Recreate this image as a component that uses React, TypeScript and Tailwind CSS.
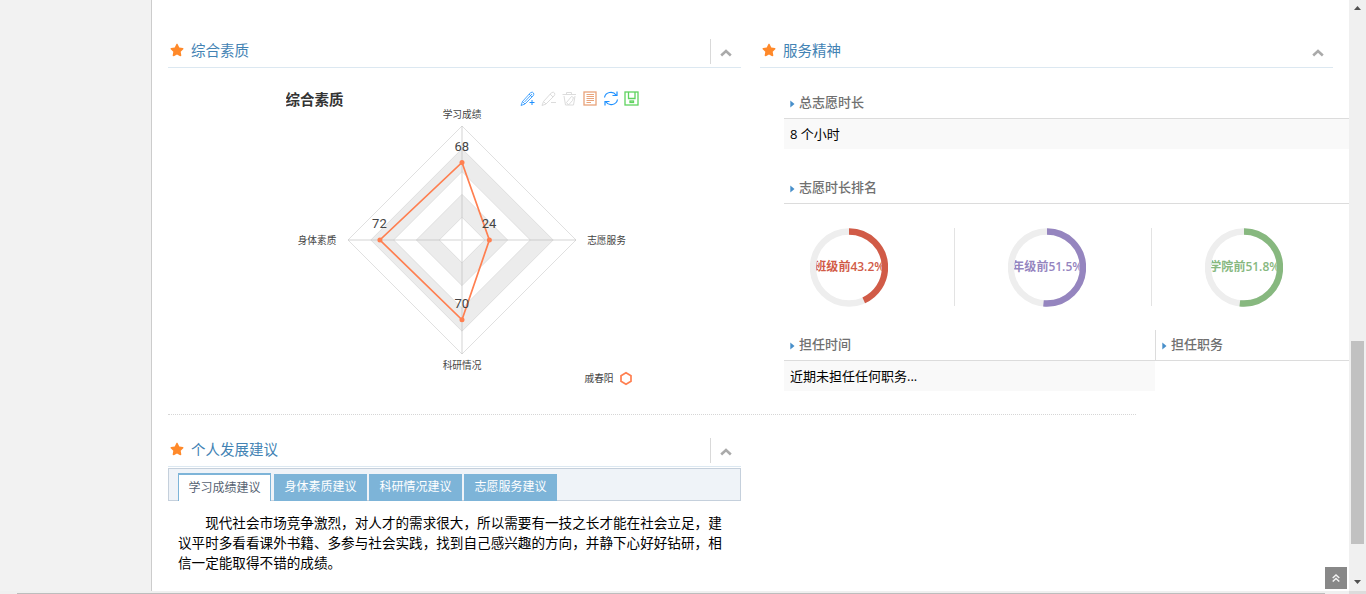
import type { ReactNode } from "react";
import { FaStar } from "react-icons/fa";

const Chevron = () => (
  <svg width="12" height="8" viewBox="0 0 12 8" fill="none" stroke="#aaa" strokeWidth="2.6">
    <path d="M1.2 6.500 L6 2 L10.8 6.500" />
  </svg>
);

function WidgetHeader({ title, divider }: { title: string; divider?: boolean }) {
  return (
    <div className="flex h-[30px] w-[573px] items-center border-b border-[#dce8f1]">
      <FaStar className="mt-[-5px] ml-[2px] size-[14px] text-[#ff892a]" />
      <h4 className="mt-[-3px] ml-[7px] flex-1 text-[14.5px] leading-5 text-[#4383b4]">{title}</h4>
      <div
        className={
          divider
            ? "mt-[-2px] flex h-[25px] w-[31px] items-center border-l border-[#d9d9d9] pt-[2px] pl-[9px]"
            : "mt-[-2px] flex h-[25px] w-[31px] items-center border-l border-transparent pt-[2px] pl-[9px]"
        }
      >
        <Chevron />
      </div>
    </div>
  );
}

function SubHeader({ children }: { children: ReactNode }) {
  return (
    <div className="flex h-[31px] items-center border-b border-[#dcdcdc] pl-[6px] text-[13px] font-medium text-[#707070]">
      <svg width="5" height="8" viewBox="0 0 5 8" className="mt-px mr-1">
        <path d="M0.3 0.500 L4.5 4 L0.3 7.500Z" fill="#478fca" />
      </svg>
      {children}
    </div>
  );
}

const CX = 176;
const CY = 165;
const R = 114;
const diamond = (f: number) =>
  `M${CX} ${CY - R * f} L${CX + R * f} ${CY} L${CX} ${CY + R * f} L${CX - R * f} ${CY}Z`;

function Radar() {
  const dots = [
    [CX, CY - R * 0.68],
    [CX + R * 0.24, CY],
    [CX, CY + R * 0.7],
    [CX - R * 0.72, CY],
  ];
  return (
    <svg width="370" height="320" viewBox="0 0 370 320" className="ml-[118px]">
      <text x="-0.5" y="30" fontSize="14.5" fontWeight="700" fill="#333">综合素质</text>
      <g fillRule="evenodd" fill="#ececec">
        <path d={diamond(0.8) + diamond(0.6)} />
        <path d={diamond(0.4) + diamond(0.2)} />
      </g>
      <g fill="none" stroke="#dcdcdc" strokeWidth="0.9">
        {[0.2, 0.4, 0.6, 0.8, 1].map((f) => (
          <path key={f} d={diamond(f)} />
        ))}
      </g>
      <path
        d={`M${CX} ${CY - R}V${CY + R}M${CX - R} ${CY}H${CX + R}`}
        stroke="#bbb"
        strokeOpacity="0.32"
        strokeWidth="2"
      />
      <path
        d={"M" + dots.map((d) => d.join(" ")).join("L") + "Z"}
        fill="none"
        stroke="#ff7f50"
        strokeWidth="1.7"
      />
      {dots.map((d) => (
        <circle key={d.join()} cx={d[0]} cy={d[1]} r="2.5" fill="#ff7f50" />
      ))}
      <g fontSize="13" fill="#444" textAnchor="middle" fontFamily="Roboto, sans-serif">
        <text x="175.7" y="75.500">68</text>
        <text x="203" y="153">24</text>
        <text x="175.7" y="233">70</text>
        <text x="93.4" y="153">72</text>
      </g>
      <g fontSize="9.7" fill="#444" textAnchor="middle">
        <text x="176" y="42.5">学习成绩</text>
        <text x="320.5" y="168.500">志愿服务</text>
        <text x="176" y="294">科研情况</text>
        <text x="31" y="168.500">身体素质</text>
        <text x="313" y="307">戚春阳</text>
      </g>
      <path d="M340 297.8 L345 300.7V306.3L340 309.2L335 306.3V300.7Z" fill="none" stroke="#ff7f50" strokeWidth="1.7" />
      <g fill="none" strokeWidth="1">
        <g stroke="#1e90ff">
          <path d="M235 30.5 L236.5 26.5 L244.5 17.7 Q246.5 16.4 247.5 18 Q248.3 19.5 247 21 L239 29 Z M236.5 26.5 L239 29 M238.5 27 L246 19 M243 19 L246 22" strokeWidth="0.8" />
          <path d="M243.5 27.5h5M246 25v5" />
        </g>
        <g stroke="#dcdcdc">
          <path d="M256 30.5 L257.5 26.5 L265.5 17.7 Q267.5 16.4 268.5 18 Q269.3 19.5 268 21 L260 29 Z M257.5 26.5 L260 29 M264 19 L267 22" />
          <path d="M265 27.5h5" />
          <path d="M276.500 19.500h13.500M280.500 19V17.500h5V19M278 21l1.500 9h8l1.500-9M280.500 27.500l5-6 2 1-1 3-4 4.500Z" />
        </g>
        <g stroke="#e9a37a">
          <rect x="298" y="17" width="12" height="13" strokeWidth="1.3" />
          <path d="M300.500 19.500h7.500M300.500 21.500h7.500M300.500 23.500h7.500M300.500 25.500h7.500M300.500 27.500h4.500" />
        </g>
        <g stroke="#1e90ff" strokeWidth="1.2">
          <path d="M318.500 22.500C319.500 17 327 15.500 330 20M331 16.500V20.500H326.500M331.500 24.500C330.500 30 323 31.500 320 27M319 30.500V26.500H323.500" />
        </g>
        <g stroke="#5fd35f" strokeWidth="1.3">
          <rect x="339" y="17" width="13" height="13" />
          <path d="M342.500 17v6.500h6.500V17" />
          <rect x="344" y="26" width="3.500" height="1.500" />
        </g>
      </g>
    </svg>
  );
}

function Gauge({ label, value, color }: { label: string; value: number; color: string }) {
  const c = 2 * Math.PI * 36;
  return (
    <svg width="78" height="79" viewBox="0 0 78 79" className="shrink-0">
      <text x="39.500" y="43" textAnchor="middle" fontSize="12" fontWeight="600" fill={color}>
        {label}前{value}%
      </text>
      <circle cx="39" cy="39.500" r="36" fill="none" stroke="#eee" strokeWidth="6.3" />
      <circle
        cx="39"
        cy="39.500"
        r="36"
        fill="none"
        stroke={color}
        strokeWidth="6.3"
        strokeDasharray={`${(c * value) / 100} ${c}`}
        transform="rotate(-90 39 39.500)"
      />
    </svg>
  );
}

const tabs = ["身体素质建议", "科研情况建议", "志愿服务建议"];

export default function App() {
  return (
    <div className="relative flex h-[594px] w-[1366px] flex-col overflow-hidden bg-white font-['Open_Sans','Noto_Sans_CJK_SC',sans-serif] text-[13px] text-black">
      <div className="flex h-[591px]">
        <aside className="w-[152px] shrink-0 border-r border-[#ccc] bg-[#f2f2f2]" />
        <main className="w-[1197px] shrink-0 pt-[38px] pl-4">
          <div className="flex h-[376px] gap-[19px]">
            <section className="w-[573px] shrink-0">
              <WidgetHeader title="综合素质" divider />
              <div className="pt-[7px]">
                <Radar />
              </div>
            </section>
            <section className="w-[589px] shrink-0">
              <WidgetHeader title="服务精神" />
              <div className="ml-6 pt-5">
                <SubHeader>总志愿时长</SubHeader>
                <div className="flex h-[30px] items-center bg-[#f9f9f9] pt-px pl-[6px]">8 个小时</div>
                <div className="h-6" />
                <SubHeader>志愿时长排名</SubHeader>
                <div className="mt-6 flex h-[78px]">
                  <div className="w-[171px] border-r border-[#e3e3e3] pl-[26px]">
                    <Gauge label="班级" value={43.2} color="#d15b47" />
                  </div>
                  <div className="w-[197px] border-r border-[#e3e3e3] pl-[53px]">
                    <Gauge label="年级" value={51.5} color="#9585bf" />
                  </div>
                  <div className="pl-[53px]">
                    <Gauge label="学院" value={51.8} color="#87b87f" />
                  </div>
                </div>
                <div className="mt-6 flex">
                  <div className="w-[371px]">
                    <SubHeader>担任时间</SubHeader>
                    <div className="flex h-[30px] items-center bg-[#f9f9f9] pt-px pl-[6px]">近期未担任任何职务...</div>
                  </div>
                  <div className="h-[31px] flex-1 border-l border-[#dcdcdc]">
                    <SubHeader>担任职务</SubHeader>
                  </div>
                </div>
              </div>
            </section>
          </div>
          <div className="w-[968px] border-t border-dotted border-[#d6d6d6]" />
          <section className="mt-[22px] w-[573px]">
            <WidgetHeader title="个人发展建议" divider />
            <div className="mt-px flex h-[33px] items-end border border-[#c5d0dc] bg-[#eff3f8] pl-[9px] text-[12px]">
              <div className="mb-[-1px] flex h-7 w-[93px] items-center justify-center border border-t-2 border-b-0 border-[#7db4d8] bg-white pb-px text-[#576373]">
                学习成绩建议
              </div>
              <div className="mb-[-1px] ml-[3px] flex h-[27px] gap-[2px]">
                {tabs.map((t) => (
                  <div key={t} className="flex w-[93px] items-center justify-center bg-[#7db4d8] pb-px text-white">
                    {t}
                  </div>
                ))}
              </div>
            </div>
            <p className="mt-3 ml-[10px] w-[546px] indent-[2em] text-[13.6px] leading-5">
              现代社会市场竞争激烈，对人才的需求很大，所以需要有一技之长才能在社会立足，建议平时多看看课外书籍、多参与社会实践，找到自己感兴趣的方向，并静下心好好钻研，相信一定能取得不错的成绩。
            </p>
          </section>
        </main>
        <div className="flex w-[17px] flex-col items-center justify-between bg-[#f0f0f0] pt-[6px] pb-[7px]">
          <svg width="7" height="4" viewBox="0 0 7 4"><path d="M0 4L3.500 0L7 4Z" fill="#505050" /></svg>
          <div className="mt-[331px] h-[203px] w-[13px] bg-[#c1c1c1]" />
          <svg width="7" height="4" viewBox="0 0 7 4" className="mt-auto"><path d="M0 0L3.500 4L7 0Z" fill="#505050" /></svg>
        </div>
      </div>
      <div className="flex h-[3px] items-end bg-[#f0f0f0]">
        <div className="ml-[17px] h-px w-[1308px] bg-[#bdbdbd]" />
        <div className="ml-6 h-[3px] flex-1 bg-[#dcdcdc]" />
      </div>
      <div className="absolute top-[567px] left-[1325px] flex h-[22px] w-[22px] items-center justify-center bg-[#888]">
        <svg width="8" height="8" viewBox="0 0 8 8" fill="none" stroke="#f2f2f2" strokeWidth="1.500">
          <path d="M0.700 4L4 1L7.300 4M0.700 7.500L4 4.500L7.300 7.500" />
        </svg>
      </div>
    </div>
  );
}
